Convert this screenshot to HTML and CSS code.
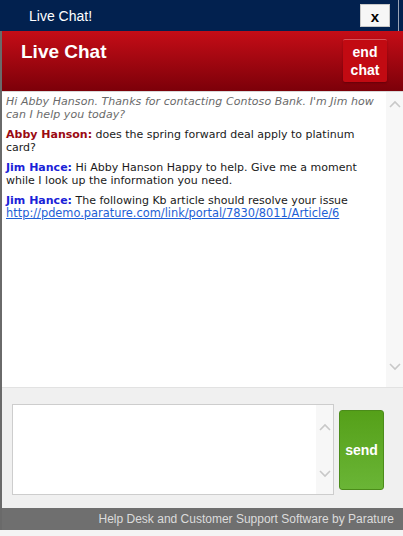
FILE: index.html
```html
<!DOCTYPE html>
<html>
<head>
<meta charset="utf-8">
<link rel="stylesheet" href="styles.css">
</head>
<body>
<div class="window">
  <div class="titlebar">
    <span class="title">Live Chat!</span>
    <span class="close">x</span>
    <span class="edge"></span>
  </div>
  <div class="frame">
    <div class="header">
      <span class="header-title">Live Chat</span>
      <button class="end-btn">end<br>chat</button>
    </div>
    <div class="messages">
      <div class="log">
        <p class="msg system">Hi Abby Hanson. Thanks for contacting Contoso Bank. I'm Jim how can I help you today?</p>
        <p class="msg"><b class="customer">Abby Hanson:</b> does the spring forward deal apply to platinum card?</p>
        <p class="msg"><b class="agent">Jim Hance:</b> Hi Abby Hanson Happy to help. Give me a moment while I look up the information you need.</p>
        <p class="msg"><b class="agent">Jim Hance:</b> The following Kb article should resolve your issue <a href="#">http://pdemo.parature.com/link/portal/7830/8011/Article/6</a></p>
      </div>
      <div class="scrollbar">
        <svg class="chev" width="12" height="8" viewBox="0 0 12 8"><path d="M1 7 L6 2 L11 7" fill="none" stroke="#c8c8c8" stroke-width="1.6"/></svg>
        <svg class="chev" width="12" height="8" viewBox="0 0 12 8"><path d="M1 1 L6 6 L11 1" fill="none" stroke="#c8c8c8" stroke-width="1.6"/></svg>
      </div>
    </div>
    <div class="composer">
      <div class="input">
        <div class="input-area"></div>
        <div class="input-scroll">
          <svg class="chev" width="12" height="8" viewBox="0 0 12 8"><path d="M1 7 L6 2 L11 7" fill="none" stroke="#c8c8c8" stroke-width="1.6"/></svg>
          <svg class="chev" width="12" height="8" viewBox="0 0 12 8"><path d="M1 1 L6 6 L11 1" fill="none" stroke="#c8c8c8" stroke-width="1.6"/></svg>
        </div>
      </div>
      <button class="send-btn">send</button>
    </div>
    <div class="footer">Help Desk and Customer Support Software by Parature</div>
  </div>
  <div class="bottom"></div>
</div>
</body>
</html>
```

FILE: styles.css
```css
* { box-sizing: border-box; }
html, body { margin: 0; padding: 0; background: #f4f4f4; }
.window {
  width: 403px;
  height: 536px;
  display: flex;
  flex-direction: column;
  font-family: "Liberation Sans", Arial, sans-serif;
}
.titlebar {
  height: 31px;
  background: #02214f;
  display: flex;
  align-items: center;
  padding-left: 29px;
  flex: none;
}
.title {
  color: #fff;
  font-size: 14px;
  flex: 1;
}
.close {
  width: 30px;
  height: 23px;
  margin-right: 8px;
  background: #f6f6f6;
  border: 1px solid #c8c8c8;
  color: #000;
  font-weight: bold;
  font-size: 15px;
  display: flex;
  align-items: center;
  justify-content: center;
  padding-top: 1px;
}
.edge {
  width: 1px;
  height: 31px;
  background: #9aa3b5;
  margin-right: 4px;
}
.frame {
  flex: 1;
  display: flex;
  flex-direction: column;
  border-left: 2px solid #6a6a6a;
}
.header {
  height: 60px;
  flex: none;
  background: linear-gradient(#c50d17, #7c0009);
  display: flex;
  align-items: flex-start;
  justify-content: space-between;
  padding: 8px 16px 0 19px;
}
.header-title {
  color: #fff;
  font-weight: bold;
  font-size: 19px;
  margin-top: 2px;
}
.end-btn {
  width: 44px;
  height: 43px;
  background: #c20a12;
  border: none;
  border-top: 1px solid #d9535a;
  border-radius: 2px;
  color: #fff;
  font-family: "Liberation Sans", Arial, sans-serif;
  font-weight: bold;
  font-size: 14px;
  line-height: 18px;
  padding: 0;
  box-shadow: 0 1px 2px rgba(0,0,0,0.25);
}
.messages {
  height: 297px;
  flex: none;
  background: #fff;
  display: flex;
  border-top: 1px solid #d8d8d8;
  border-bottom: 1px solid #e2e2e2;
}
.log {
  flex: 1;
  padding: 3px 4px 0 4px;
  font-family: "DejaVu Sans", Verdana, sans-serif;
  font-size: 11px;
  line-height: 13px;
  color: #1a1a1a;
}
.msg { margin: 0 0 7px 0; }
.system {
  font-style: italic;
  color: #6a6a6a;
  letter-spacing: 0.05px;
}
.customer { color: #9a0a12; }
.agent { color: #1a22d8; }
.log a { color: #1e5fd6; font-size: 11.4px; }
.scrollbar {
  width: 17px;
  background: #f7f7f7;
  display: flex;
  flex-direction: column;
  justify-content: space-between;
  align-items: center;
  padding: 8px 0 16px;
}
.composer {
  height: 120px;
  flex: none;
  background: #f0f0f0;
  display: flex;
  align-items: flex-start;
  padding: 16px 0 0 10px;
}
.input {
  width: 322px;
  height: 91px;
  background: #fff;
  border: 1px solid #cdcdcd;
  display: flex;
}
.input-area { flex: 1; }
.input-scroll {
  width: 17px;
  background: #f7f7f7;
  display: flex;
  flex-direction: column;
  justify-content: space-between;
  align-items: center;
  padding: 18px 0 16px;
}
.send-btn {
  margin: 6px 0 0 5px;
  width: 45px;
  height: 80px;
  background: linear-gradient(#55a019, #6ab536);
  border: 1px solid #4b8c1a;
  border-radius: 3px;
  color: #fff;
  font-family: "Liberation Sans", Arial, sans-serif;
  font-weight: bold;
  font-size: 14px;
  padding: 0;
}
.footer {
  height: 22px;
  flex: none;
  background: #6f6f6f;
  color: #dcdcdc;
  font-size: 12px;
  text-align: right;
  padding: 4px 9px 0 0;
}
.bottom {
  height: 6px;
  flex: none;
  background: #f4f4f4;
}
```
